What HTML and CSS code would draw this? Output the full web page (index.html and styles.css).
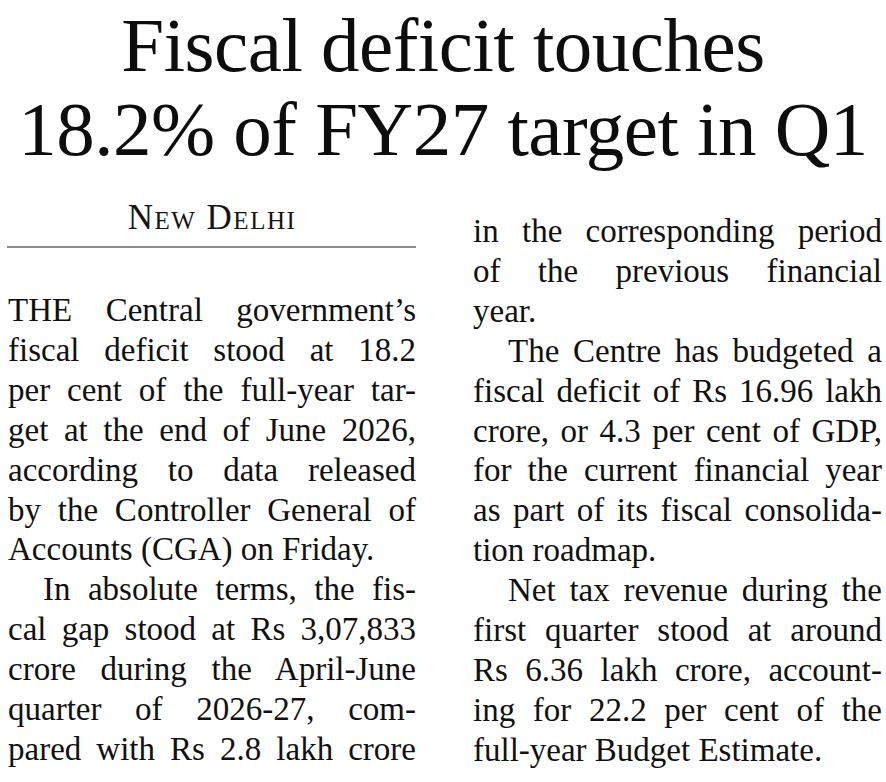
FILE: index.html
```html
<!DOCTYPE html>
<html lang="en">
<head>
<meta charset="utf-8">
<title>Fiscal deficit touches 18.2% of FY27 target in Q1</title>
<link rel="stylesheet" href="styles.css">
</head>
<body>
<article class="story">
  <h1 class="headline">
    <span class="hl-line">Fiscal deficit touches</span>
    <span class="hl-line">18.2% of FY27 target in Q1</span>
  </h1>
  <div class="columns">
    <div class="col col-left">
      <div class="dateline">New Delhi</div>
      <hr class="rule">
      <p class="para">
        <span class="ln">THE Central government’s</span>
        <span class="ln">fiscal deficit stood at 18.2</span>
        <span class="ln">per cent of the full-year tar-</span>
        <span class="ln">get at the end of June 2026,</span>
        <span class="ln">according to data released</span>
        <span class="ln">by the Controller General of</span>
        <span class="ln end">Accounts (CGA) on Friday.</span>
      </p>
      <p class="para">
        <span class="ln first">In absolute terms, the fis-</span>
        <span class="ln">cal gap stood at Rs 3,07,833</span>
        <span class="ln">crore during the April-June</span>
        <span class="ln">quarter of 2026-27, com-</span>
        <span class="ln">pared with Rs 2.8 lakh crore</span>
      </p>
    </div>
    <div class="col col-right">
      <p class="para">
        <span class="ln">in the corresponding period</span>
        <span class="ln">of the previous financial</span>
        <span class="ln end">year.</span>
      </p>
      <p class="para">
        <span class="ln first">The Centre has budgeted a</span>
        <span class="ln">fiscal deficit of Rs 16.96 lakh</span>
        <span class="ln">crore, or 4.3 per cent of GDP,</span>
        <span class="ln">for the current financial year</span>
        <span class="ln">as part of its fiscal consolida-</span>
        <span class="ln end">tion roadmap.</span>
      </p>
      <p class="para">
        <span class="ln first">Net tax revenue during the</span>
        <span class="ln">first quarter stood at around</span>
        <span class="ln">Rs 6.36 lakh crore, account-</span>
        <span class="ln">ing for 22.2 per cent of the</span>
        <span class="ln end">full-year Budget Estimate.</span>
      </p>
    </div>
  </div>
</article>
</body>
</html>
```

FILE: styles.css
```css
html, body {
  margin: 0;
  padding: 0;
  background: #ffffff;
}

body {
  font-family: "Liberation Serif", "Times New Roman", serif;
  color: #111111;
  width: 886px;
  height: 782px;
  overflow: hidden;
}

.story {
  display: flex;
  flex-direction: column;
}

.headline {
  margin: 3px 0 0;
  font-weight: normal;
  font-size: 77px;
  line-height: 84px;
  text-align: center;
  letter-spacing: -0.5px;
  color: #0d0d0d;
}

.hl-line {
  display: block;
  white-space: nowrap;
}

.columns {
  display: grid;
  grid-template-columns: 408px 409px;
  column-gap: 57px;
  padding-left: 8px;
  margin-top: 27px;
}

.col-right {
  padding-top: 14px;
}

.dateline {
  font-size: 35px;
  line-height: 40px;
  font-variant: small-caps;
  letter-spacing: 1.5px;
  text-align: center;
  color: #151515;
}

.rule {
  margin: 8px 0 0 -1px;
  border: 0;
  height: 2px;
  background: #8c8c8c;
}

.col-left .rule + .para {
  margin-top: 43px;
}

.para {
  margin: 0;
  font-size: 33px;
  line-height: 39.9px;
}

.ln {
  display: block;
  white-space: nowrap;
  text-align: justify;
  text-align-last: justify;
}

.ln.first {
  text-indent: 35px;
}

.ln.end {
  text-align: left;
  text-align-last: left;
}
```
